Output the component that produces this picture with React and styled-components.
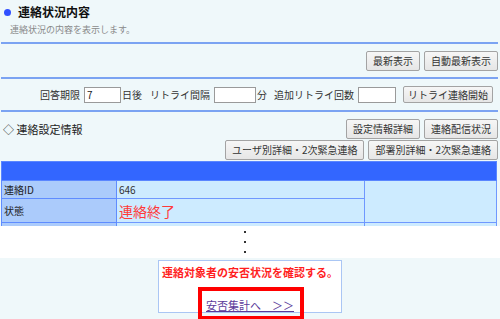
import styled, { createGlobalStyle } from "styled-components";

const GlobalStyle = createGlobalStyle`
  body {
    margin: 0;
    background: #eff8fa;
    font-family: "Noto Sans CJK JP", "Noto Sans", sans-serif;
    color: #222;
  }
`;

export default function App() {
    return (
        <Page>
            <GlobalStyle />
            <Top>
                <Heading>
                    <Dot />
                    <Title>連絡状況内容</Title>
                </Heading>
                <Lead>連絡状況の内容を表示します。</Lead>
                <Rule />
                <ActionBar>
                    <Button>最新表示</Button>
                    <Button>自動最新表示</Button>
                </ActionBar>
                <Rule />
                <RetryBar>
                    <Label>回答期限</Label>
                    <Field width={37} defaultValue="7" />
                    <Label $tight>日後</Label>
                    <Label $gap={8}>リトライ間隔</Label>
                    <Field width={42} />
                    <Label $tight>分</Label>
                    <Label $gap={7}>追加リトライ回数</Label>
                    <Field width={38} />
                    <SmallButton>リトライ連絡開始</SmallButton>
                </RetryBar>
                <Rule />
                <SettingsBar>
                    <SectionLabel>◇ 連絡設定情報</SectionLabel>
                    <ButtonStack>
                        <ButtonRow>
                            <Button>設定情報詳細</Button>
                            <Button>連絡配信状況</Button>
                        </ButtonRow>
                        <ButtonRow>
                            <Button>ユーザ別詳細・2次緊急連絡</Button>
                            <Button>部署別詳細・2次緊急連絡</Button>
                        </ButtonRow>
                    </ButtonStack>
                </SettingsBar>
                <TableClip>
                    <InfoTable>
                        <colgroup>
                            <col style={{ width: 115 }} />
                            <col style={{ width: 248 }} />
                            <col />
                        </colgroup>
                        <thead>
                            <tr>
                                <HeadCell colSpan={3} />
                            </tr>
                        </thead>
                        <tbody>
                            <tr>
                                <KeyCell>連絡ID</KeyCell>
                                <ValueCell>646</ValueCell>
                                <ValueCell rowSpan={2} />
                            </tr>
                            <tr>
                                <KeyCell $tall>状態</KeyCell>
                                <ValueCell $tall>
                                    <Status>連絡終了</Status>
                                </ValueCell>
                            </tr>
                            <tr>
                                <KeyCell>&nbsp;</KeyCell>
                                <ValueCell />
                                <ValueCell />
                            </tr>
                        </tbody>
                    </InfoTable>
                </TableClip>
            </Top>
            <Cut>
                <Dots>
                    <i />
                    <i />
                    <i />
                </Dots>
            </Cut>
            <Bottom>
                <NoticeBox>
                    <Notice>連絡対象者の安否状況を確認する。</Notice>
                    <LinkLine>
                        <LinkWrap>
                            <SummaryLink href="#">安否集計へ　＞＞</SummaryLink>
                            <Highlight />
                        </LinkWrap>
                    </LinkLine>
                </NoticeBox>
            </Bottom>
        </Page>
    );
}

const Page = styled.div`
    width: 500px;
    height: 319px;
    overflow: hidden;
`;

const Top = styled.div`
    background: #eff8fa;
`;

const Heading = styled.div`
    display: flex;
    align-items: center;
    height: 16px;
    padding-top: 4px;
`;

const Dot = styled.span`
    width: 7px;
    height: 7px;
    border-radius: 50%;
    background: #3050ff;
    margin-left: 4px;
    margin-right: 7px;
`;

const Title = styled.span`
    font-size: 12px;
    font-weight: bold;
    color: #111;
    line-height: 16px;
`;

const Lead = styled.div`
    font-size: 9px;
    line-height: 12px;
    color: #8a8a8a;
    margin: 4px 0 0 10px;
    height: 18px;
`;

const Rule = styled.div`
    height: 2px;
    margin: 0 2px 0 1px;
    background: #7ba3f2;
`;

const ActionBar = styled.div`
    display: flex;
    justify-content: flex-end;
    gap: 4px;
    padding: 7px 2px 6px 0;
`;

const Button = styled.button`
    height: 20px;
    box-sizing: border-box;
    padding: 0 6px;
    border: 1px solid #a3a3a3;
    border-radius: 2px;
    background: linear-gradient(#f6f6f6, #e6e6e6);
    font-family: inherit;
    font-size: 10px;
    line-height: 18px;
    color: #333;
    white-space: nowrap;
`;

const SmallButton = styled(Button)`
    height: 17px;
    line-height: 15px;
    margin-left: 7px;
    padding: 0 4px;
`;

const RetryBar = styled.div`
    display: flex;
    justify-content: flex-end;
    align-items: center;
    height: 31px;
    padding-right: 7px;
`;

const Label = styled.span`
    font-size: 10px;
    color: #333;
    white-space: nowrap;
    margin-left: ${(p) => (p.$tight ? 1 : p.$gap || 0)}px;
    margin-right: ${(p) => (p.$tight ? 0 : 4)}px;
`;

const Field = styled.input`
    width: ${(p) => p.width}px;
    height: 16px;
    box-sizing: border-box;
    border: 1px solid #9a9a9a;
    background: #fff;
    font-family: inherit;
    font-size: 10px;
    padding: 0 2px;
    color: #222;
`;

const SettingsBar = styled.div`
    display: flex;
    justify-content: space-between;
    padding: 7px 2px 1px 3px;
`;

const SectionLabel = styled.span`
    font-size: 11px;
    line-height: 20px;
    color: #222;
    white-space: nowrap;
`;

const ButtonStack = styled.div`
    display: flex;
    flex-direction: column;
    align-items: flex-end;
    gap: 1px;
`;

const ButtonRow = styled.div`
    display: flex;
    gap: 4px;
`;

const TableClip = styled.div`
    height: 65px;
    overflow: hidden;
    padding-left: 1px;
`;

const InfoTable = styled.table`
    width: 496px;
    border-collapse: collapse;
    table-layout: fixed;
    border-top: 1px solid #9fb8ff;
`;

const HeadCell = styled.th`
    height: 18px;
    padding: 0;
    background: #3366ff;
    border: 1px solid #5a86ff;
`;

const KeyCell = styled.td`
    height: ${(p) => (p.$tall ? 23 : 17)}px;
    padding: 0 2px;
    background: #abcbfb;
    border: 1px solid #5f8cff;
    font-size: 10px;
    color: #222;
`;

const ValueCell = styled.td`
    height: ${(p) => (p.$tall ? 23 : 17)}px;
    padding: 0 2px;
    background: #cdebff;
    border: 1px solid #6f98ff;
    font-size: 10px;
    color: #333;
    vertical-align: middle;
`;

const Status = styled.span`
    font-size: 14px;
    color: #ff3a3a;
`;

const Cut = styled.div`
    height: 32px;
    background: #fff;
    display: flex;
    justify-content: center;
    padding-right: 10px;
`;

const Dots = styled.div`
    display: flex;
    flex-direction: column;
    gap: 8px;
    padding-top: 5px;

    i {
        width: 2px;
        height: 2px;
        background: #333;
    }
`;

const Bottom = styled.div`
    background: #eff8fa;
    height: 61px;
    padding-top: 2px;
    display: flex;
    justify-content: center;
`;

const NoticeBox = styled.div`
    width: 184px;
    height: 53px;
    box-sizing: border-box;
    background: #fff;
    border: 1px solid #aac6f4;
    padding-top: 4px;
    text-align: center;
`;

const Notice = styled.div`
    font-size: 11px;
    font-weight: bold;
    line-height: 14px;
    color: #ff1f1f;
    white-space: nowrap;
`;

const LinkLine = styled.div`
    margin-top: 17px;
    line-height: 14px;
`;

const LinkWrap = styled.span`
    position: relative;
    display: inline-block;
    margin-left: 0;
`;

const SummaryLink = styled.a`
    font-size: 11px;
    color: #5b3b9a;
    text-decoration: underline;
`;

const Highlight = styled.span`
    position: absolute;
    top: -9px;
    bottom: -8px;
    left: -8px;
    right: -10px;
    border: 4px solid #ff0000;
`;
